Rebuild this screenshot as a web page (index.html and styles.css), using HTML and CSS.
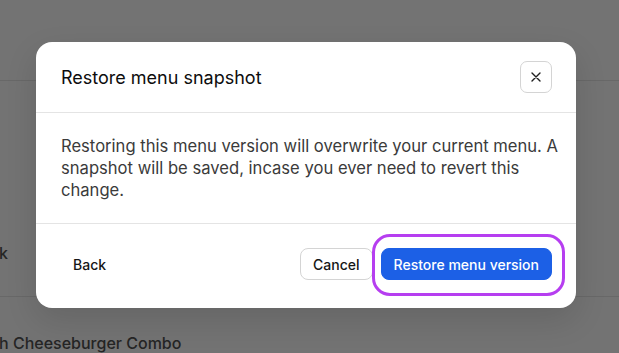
FILE: index.html
```html
<!DOCTYPE html>
<html lang="en">
<head>
<meta charset="utf-8">
<title>Restore menu snapshot</title>
<link rel="stylesheet" href="styles.css">
</head>
<body>
<div class="page">
  <div class="row row-top"></div>
  <div class="row row-mid"><span class="item-name">k</span></div>
  <div class="row row-bottom"><span class="item-name">h Cheeseburger Combo</span></div>
</div>

<div class="modal" role="dialog" aria-labelledby="modal-title">
  <div class="modal-header">
    <h2 class="modal-title" id="modal-title">Restore menu snapshot</h2>
    <button class="close-btn" aria-label="Close">
      <svg width="10" height="10" viewBox="0 0 10 10" fill="none" stroke="#1f1f1f" stroke-width="1.4" stroke-linecap="round"><path d="M1 1L9 9M9 1L1 9"/></svg>
    </button>
  </div>
  <div class="modal-body">
    <p>Restoring this menu version will overwrite your current menu. A snapshot will be saved, incase you ever need to revert this change.</p>
  </div>
  <div class="modal-footer">
    <button class="btn btn-ghost">Back</button>
    <div class="actions">
      <button class="btn btn-outline">Cancel</button>
      <button class="btn btn-primary">Restore menu version</button>
    </div>
  </div>
</div>
</body>
</html>
```

FILE: styles.css
```css
html, body {
  margin: 0;
  padding: 0;
}
body {
  background: #737373;
  font-family: Inter, "Noto Sans", sans-serif;
  width: 619px;
  height: 353px;
  overflow: hidden;
  position: relative;
}
.page {
  display: flex;
  flex-direction: column;
}
.row {
  border-bottom: 1px solid #686868;
  display: flex;
  flex-direction: column;
}
.row-top {
  height: 80px;
}
.row-mid {
  height: 216px;
  justify-content: flex-end;
  box-sizing: border-box;
}
.row-mid .item-name {
  margin-bottom: 32px;
}
.row-bottom {
  border-bottom: none;
  padding-top: 35px;
}
.item-name {
  font-size: 16px;
  font-weight: 500;
  color: #252525;
  line-height: 22px;
  margin-left: -1px;
}

.modal {
  position: absolute;
  left: 36px;
  top: 42px;
  width: 540px;
  background: #fff;
  border-radius: 16px;
  box-shadow: 0 12px 32px rgba(0, 0, 0, 0.12);
  color: #111;
}
.modal-header {
  height: 71px;
  box-sizing: border-box;
  padding: 0 24px 0 25px;
  display: flex;
  align-items: center;
  justify-content: space-between;
  border-bottom: 1px solid #e4e4e4;
}
.modal-title {
  margin: 0;
  font-size: 18px;
  font-weight: 400;
  color: #0d0d0d;
}
.close-btn {
  width: 32px;
  height: 32px;
  box-sizing: border-box;
  border: 1px solid #d4d4d4;
  border-radius: 7px;
  background: #fff;
  display: flex;
  align-items: center;
  justify-content: center;
  padding: 0;
}
.modal-body {
  padding: 22px 0 22px 25px;
  height: 110px;
  box-sizing: border-box;
}
.modal-body p {
  margin: 0;
  font-size: 16.6px;
  line-height: 22px;
  color: #3b3b3b;
}
.modal-footer {
  border-top: 1px solid #e4e4e4;
  padding: 24px 24px 28px 24px;
  display: flex;
  align-items: center;
  justify-content: space-between;
}
.actions {
  display: flex;
  gap: 8px;
}
.btn {
  height: 32px;
  box-sizing: border-box;
  font-family: Inter, "Noto Sans", sans-serif;
  font-size: 14px;
  font-weight: 500;
  border-radius: 8px;
  padding: 0 12px;
  background: #fff;
  color: #161616;
  border: 1px solid transparent;
}
.btn-outline {
  border-color: #d4d4d4;
}
.btn-primary {
  position: relative;
  background: #1c60e6;
  border-color: #1c60e6;
  color: #fff;
}
.btn-primary::after {
  content: "";
  position: absolute;
  left: -10px;
  right: -14px;
  top: -15px;
  bottom: -17px;
  border: 3px solid #b63ef0;
  border-radius: 18px;
  pointer-events: none;
}
```
